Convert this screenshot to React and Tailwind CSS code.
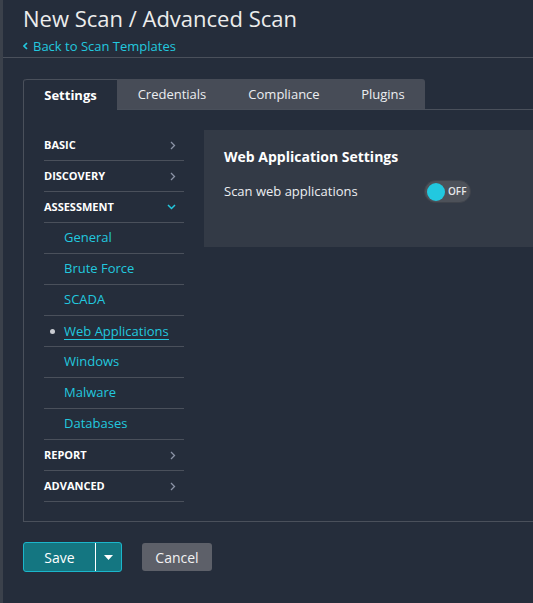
import React from "react";

const font = { fontFamily: '"Open Sans", "Noto Sans", sans-serif' };

function Chevron({ open }) {
  return open ? (
    <svg width="9" height="6" viewBox="0 0 9 6" className="text-[#22c8df]">
      <path d="M1 1l3.5 3.5L8 1" fill="none" stroke="currentColor" strokeWidth="1.5" />
    </svg>
  ) : (
    <svg width="6" height="9" viewBox="0 0 6 9" className="text-[#8b93a6]">
      <path d="M1 1l3.5 3.5L1 8" fill="none" stroke="currentColor" strokeWidth="1.3" />
    </svg>
  );
}

function Section({ label, open }) {
  return (
    <div className="flex h-[31px] items-center justify-between border-b border-[#4a505b] pr-2">
      <span className="text-[11px] font-bold uppercase text-white">{label}</span>
      <Chevron open={open} />
    </div>
  );
}

function SubItem({ label, active }) {
  return (
    <div className="relative flex h-[31px] items-center border-b border-[#4a505b] pl-5">
      {active && (
        <span className="absolute left-[6px] top-[13px] h-[5px] w-[5px] rounded-full bg-[#c9ccd2]" />
      )}
      <span
        className={
          "text-[13px] text-[#22c8df] " +
          (active ? "border-b border-[#22c8df] leading-[16px]" : "")
        }
      >
        {label}
      </span>
    </div>
  );
}

export default function App() {
  const tabs = ["Credentials", "Compliance", "Plugins"];
  return (
    <div className="flex h-[603px] w-[533px] overflow-hidden bg-[#252d3b]" style={font}>
      <div className="w-[3px] shrink-0 bg-[#3b414b]" />
      <div className="flex flex-1 flex-col">
        {/* Header */}
        <div className="border-b border-[#4a505b] pl-5 pt-[3px] pb-[2px]">
          <h1 className="text-[22px] leading-[30px] text-[#ececec]">New Scan / Advanced Scan</h1>
          <a className="mt-[4px] flex items-center gap-[5px] text-[13px] leading-[18px] text-[#22c8df]">
            <svg width="5" height="8" viewBox="0 0 5 8">
              <path d="M4 1L1 4l3 3" fill="none" stroke="#22c8df" strokeWidth="1.6" />
            </svg>
            Back to Scan Templates
          </a>
        </div>

        {/* Panel */}
        <div className="ml-5 mt-[21px] flex flex-col rounded-tl-[3px] border-b border-l border-[#4a505b]">
          <div className="flex h-[31px] text-[13px]">
            <div className="flex w-[93px] items-center justify-center rounded-tl-[3px] border-t border-[#4a505b] pt-[2px] font-bold text-white">
              Settings
            </div>
            {tabs.map((t, i) => (
              <div
                key={t}
                className={
                  "flex items-center justify-center border-b border-[#4a505b] bg-[#474c57] pt-px text-[#eceef1] " +
                  (i === 0 ? "w-[110px]" : i === 1 ? "w-[114px]" : "w-[84px] rounded-tr-[3px]")
                }
              >
                {t}
              </div>
            ))}
            <div className="flex-1 border-b border-[#4a505b]" />
          </div>

          <div className="flex gap-5 pt-5 pb-[19px] pl-5">
            <div className="w-[140px] shrink-0">
              <Section label="Basic" />
              <Section label="Discovery" />
              <Section label="Assessment" open />
              <SubItem label="General" />
              <SubItem label="Brute Force" />
              <SubItem label="SCADA" />
              <SubItem label="Web Applications" active />
              <SubItem label="Windows" />
              <SubItem label="Malware" />
              <SubItem label="Databases" />
              <Section label="Report" />
              <Section label="Advanced" />
            </div>
            <div className="h-[117px] flex-1 bg-[#333a46] px-5 pt-[17px]">
              <h2 className="text-[14px] font-bold leading-[20px] text-white">Web Application Settings</h2>
              <div className="mt-[13px] flex items-center">
                <span className="w-[200px] text-[13px] text-[#eceef1]">Scan web applications</span>
                <div className="flex h-[23px] w-[47px] items-center rounded-full border border-[#3f434b] bg-[#4d5159] pl-[2px]">
                  <span className="h-[18px] w-[18px] rounded-full bg-[#22c8df]" />
                  <span className="ml-[3px] text-[10px] font-semibold text-[#e6e8eb]">OFF</span>
                </div>
              </div>
            </div>
          </div>
        </div>

        {/* Buttons */}
        <div className="ml-5 mt-5 flex items-center gap-5">
          <div className="flex h-[30px] overflow-hidden rounded-[3px] border border-[#1bb6cb] bg-[#147681] text-white">
            <button className="w-[71px] text-[14px]">Save</button>
            <div className="w-px bg-white" />
            <button className="flex w-[25px] items-center justify-center">
              <svg width="9" height="5" viewBox="0 0 9 5">
                <path d="M0 0h9L4.5 5z" fill="#fff" />
              </svg>
            </button>
          </div>
          <button className="h-[28px] w-[70px] rounded-[3px] bg-[#5d6069] text-[14px] text-[#f2f2f2]">Cancel</button>
        </div>
      </div>
    </div>
  );
}
